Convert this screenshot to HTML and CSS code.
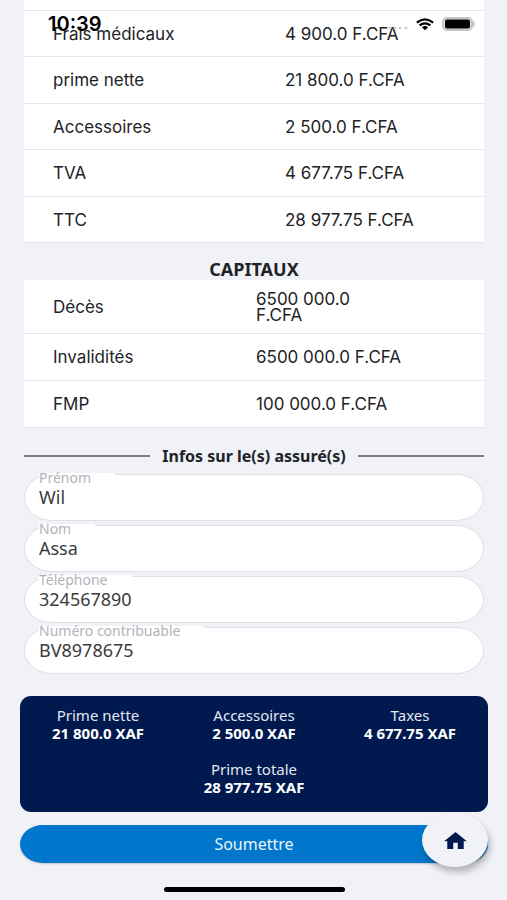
FILE: index.html
```html
<!DOCTYPE html>
<html lang="fr">
<head>
<meta charset="utf-8">
<meta name="viewport" content="width=device-width, initial-scale=1">
<title>Souscription</title>
<link rel="stylesheet" href="styles.css">
</head>
<body>
<header class="status">
  <span class="time">10:39</span>
  <span class="indicators">
    <svg class="dots" viewBox="0 0 20 4" aria-hidden="true"><circle cx="2" cy="2" r="1.5"/><circle cx="7" cy="2" r="1.5"/><circle cx="12" cy="2" r="1.5"/><circle cx="18" cy="2" r="1.5"/></svg>
    <svg class="wifi" viewBox="0 0 20 14" aria-hidden="true"><path d="M1.200 5Q10-2 18.800 5" /><path d="M4.200 8Q10 3.400 15.800 8"/><path class="fill" d="M6.600 10Q10 7.400 13.400 10L10 13.200Z"/></svg>
    <svg class="battery" viewBox="0 0 34 14" aria-hidden="true"><rect class="shell" x="1" y="1" width="29" height="12" rx="4"/><rect x="3" y="2.500" width="25" height="9" rx="2"/><path class="cap" d="M31 4Q34.500 7 31 10Z"/></svg>
  </span>
</header>

<main class="page">
  <div class="sheet premiums">
    <table>
      <tbody>
        <tr><th scope="row">Frais médicaux</th><td>4 900.0 F.CFA</td></tr>
        <tr><th scope="row">prime nette</th><td>21 800.0 F.CFA</td></tr>
        <tr><th scope="row">Accessoires</th><td>2 500.0 F.CFA</td></tr>
        <tr><th scope="row">TVA</th><td>4 677.75 F.CFA</td></tr>
        <tr><th scope="row">TTC</th><td>28 977.75 F.CFA</td></tr>
      </tbody>
    </table>
  </div>

  <h2 class="title">CAPITAUX</h2>
  <div class="sheet capitals">
    <table>
      <tbody>
        <tr><th scope="row">Décès</th><td>6500 000.0<br>F.CFA</td></tr>
        <tr><th scope="row">Invalidités</th><td>6500 000.0 F.CFA</td></tr>
        <tr><th scope="row">FMP</th><td>100 000.0 F.CFA</td></tr>
      </tbody>
    </table>
  </div>

  <form class="form">
    <h2 class="divider">Infos sur le(s) assuré(s)</h2>
    <div class="fields">
      <div class="field"><input id="prenom" type="text" value="Wil"><label for="prenom">Prénom</label></div>
      <div class="field"><input id="nom" type="text" value="Assa"><label for="nom">Nom</label></div>
      <div class="field"><input id="tel" type="tel" value="324567890"><label for="tel">Téléphone</label></div>
      <div class="field"><input id="contrib" type="text" value="BV8978675"><label for="contrib">Numéro contribuable</label></div>
    </div>

    <dl class="summary">
      <div><dt>Prime nette</dt><dd>21 800.0 XAF</dd></div>
      <div><dt>Accessoires</dt><dd>2 500.0 XAF</dd></div>
      <div><dt>Taxes</dt><dd>4 677.75 XAF</dd></div>
      <div class="total"><dt>Prime totale</dt><dd>28 977.75 XAF</dd></div>
    </dl>

    <div class="actions">
      <button class="submit" type="submit">Soumettre</button>
      <button class="home" type="button" aria-label="Accueil">
        <svg viewBox="0 0 24 18" aria-hidden="true"><path d="M12 0L24 9.800H20.700V18H14.400V11.500H9.600V18H3.300V9.800H0Z"/></svg>
      </button>
    </div>
  </form>
  <div class="handle"></div>
</main>
</body>
</html>
```
FILE: styles.css
```css
* { box-sizing: border-box; }

body {
  margin: 0;
  background: #f0f2f8;
  color: #222326;
  font-family: "Noto Sans", sans-serif;
}

h2, dl, dd { margin: 0; }

.status {
  position: absolute;
  z-index: 2;
  top: 14px;
  left: 0;
  right: 0;
  height: 20px;
  padding: 0 31px 0 48px;
  display: flex;
  justify-content: space-between;
  align-items: center;
  color: #000;
}
.time { font: 600 20px/20px Inter, sans-serif; }
.indicators { display: flex; align-items: center; gap: 7px; }
.dots { width: 20px; height: 4px; fill: #cfcfcf; margin-top: 8px; }
.wifi { width: 20px; height: 13px; fill: none; stroke: #000; stroke-width: 2.4; }
.wifi .fill { fill: #000; stroke: none; }
.battery { width: 34px; height: 14px; }
.battery .shell { fill: #e6e6e6; stroke: #c4c4c4; stroke-width: 2; }
.battery .cap { fill: #b9b9b9; }

.page { padding: 0 19px 8px 20px; }

.sheet {
  margin: 0 4px;
  background: #fff;
  border-bottom: 1px solid #e4e5e9;
}
.premiums { padding-top: 10px; }
table {
  width: 100%;
  border-collapse: separate;
  border-spacing: 0;
  table-layout: fixed;
  font: 400 17px/16px Inter, sans-serif;
}
th, td {
  height: 47px;
  padding: 0;
  text-align: left;
  font-weight: 400;
  border-top: 1px solid #e6e7ea;
}
th { padding-left: 29px; }
.premiums th { width: 261px; }
.premiums tr:nth-child(odd) > * { height: 46px; }
.capitals th { width: 232px; }
.capitals tr:first-child > * { height: 53px; border-top: 0; }

.title {
  margin-top: 15px;
  text-align: center;
  font-size: 18px;
  line-height: 22px;
}

.divider {
  display: flex;
  align-items: center;
  gap: 12px;
  margin: 18px 4px 8px;
  font-size: 16px;
  line-height: 20px;
}
.divider::before, .divider::after {
  content: "";
  flex: 1;
  height: 2px;
  background: #7d8083;
}

.fields {
  display: grid;
  gap: 4px;
  margin: 0 4px;
}
.field { position: relative; }
.field input {
  display: block;
  width: 100%;
  height: 47px;
  padding: 0 14px 2px;
  border: 1px solid #dfe0e4;
  border-radius: 28px / 24px;
  background: #fff;
  color: #3a3b3e;
  font: 400 18px/24px "Noto Sans", sans-serif;
  outline: 0;
}
.field label {
  position: absolute;
  top: -1px;
  left: 15px;
  padding-right: 24px;
  background: #fff;
  color: #b2b3b7;
  font-size: 14px;
  line-height: 10px;
}

.summary {
  display: grid;
  grid-template-columns: repeat(3, 1fr);
  row-gap: 18px;
  margin-top: 22px;
  padding: 10px 0 16px;
  border-radius: 11px;
  background: #00194f;
  color: #fff;
  text-align: center;
  font-size: 15px;
  line-height: 18px;
}
.summary dt { color: #e3e7f0; }
.summary dd { font-weight: 700; }
.summary .total { grid-column: 2; }

.actions { position: relative; margin-top: 13px; }
.submit {
  display: block;
  width: 100%;
  height: 38px;
  border: 0;
  border-radius: 23px / 19px;
  background: #0077cc;
  box-shadow: 0 1px 2px #0003;
  color: #e9f3fb;
  font: 400 16px/20px "Noto Sans", sans-serif;
}
.home {
  position: absolute;
  right: 0;
  top: -12px;
  width: 66px;
  height: 54px;
  padding: 0;
  border: 0;
  border-radius: 50%;
  background: #f0f2f8;
  box-shadow: 2px 5px 7px #0004;
  display: grid;
  place-items: center;
}
.home svg { width: 23px; height: 17px; fill: #00194f; }

.handle {
  width: 181px;
  height: 5px;
  margin: 24px auto 0;
  border-radius: 3px;
  background: #000;
}
```
